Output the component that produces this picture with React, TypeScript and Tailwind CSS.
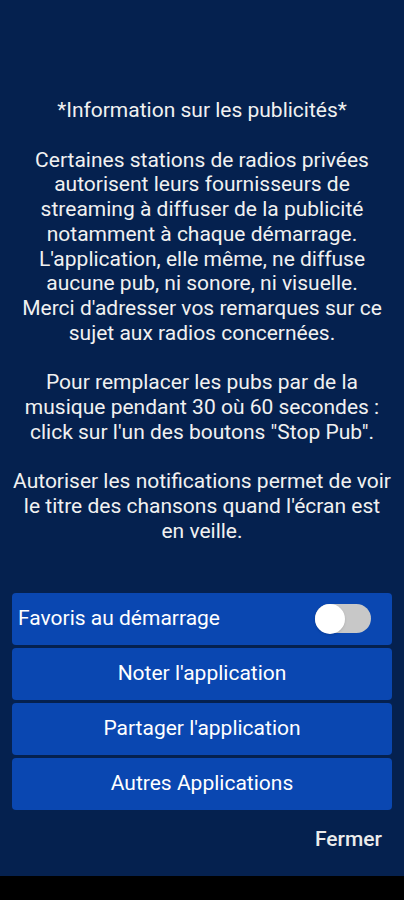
import React, { useState } from "react";

const BG = "#05214f";
const BUTTON_BLUE = "#0a47b1";

// line breaks follow the original screen
const paragraphs = [
  [
    "Certaines stations de radios privées",
    "autorisent leurs fournisseurs de",
    "streaming à diffuser de la publicité",
    "notamment à chaque démarrage.",
    "L'application, elle même, ne diffuse",
    "aucune pub, ni sonore, ni visuelle.",
    "Merci d'adresser vos remarques sur ce",
    "sujet aux radios concernées.",
  ],
  [
    "Pour remplacer les pubs par de la",
    "musique pendant 30 où 60 secondes :",
    "click sur l'un des boutons \"Stop Pub\".",
  ],
  [
    "Autoriser les notifications permet de voir",
    "le titre des chansons quand l'écran est",
    "en veille.",
  ],
];

const actions = ["Noter l'application", "Partager l'application", "Autres Applications"];

export default function App() {
  const [favoris, setFavoris] = useState(false);

  return (
    <div
      className="flex h-[900px] w-full flex-col"
      style={{ fontFamily: "Roboto, 'Noto Sans', sans-serif" }}
    >
      <div className="flex flex-1 flex-col" style={{ backgroundColor: BG }}>
        {/* Info text */}
        <div className="whitespace-nowrap px-[8px] pt-[98px] text-center text-[21px] leading-[24.75px] text-[#f1f1f1]">
          <p>*Information sur les publicités*</p>
          {paragraphs.map((lines, i) => (
            <p key={i} className="mt-[24.75px]">
              {lines.map((line, j) => (
                <span key={j} className="block">
                  {line}
                </span>
              ))}
            </p>
          ))}
        </div>

        {/* Buttons */}
        <div className="mt-[49px] flex flex-col gap-[3px] px-[12px]">
          <div
            className="flex h-[52px] items-center justify-between rounded-[4px] pl-[6px] pr-[21px]"
            style={{ backgroundColor: BUTTON_BLUE }}
          >
            <span className="text-[21px] text-white">Favoris au démarrage</span>
            <button
              onClick={() => setFavoris(!favoris)}
              className={
                favoris
                  ? "flex h-[29px] w-[56px] items-center justify-end rounded-full bg-[#9fc0ff]"
                  : "flex h-[29px] w-[56px] items-center justify-start rounded-full bg-[#c8c8c8]"
              }
            >
              <span className="h-[30px] w-[30px] rounded-full bg-white shadow-sm"></span>
            </button>
          </div>
          {actions.map((label) => (
            <button
              key={label}
              className="flex h-[52px] items-center justify-center rounded-[4px] text-[21px] text-white"
              style={{ backgroundColor: BUTTON_BLUE }}
            >
              {label}
            </button>
          ))}
        </div>

        <div className="mt-[17px] flex justify-end pr-[22px]">
          <button className="text-[21px] font-medium leading-[24px] text-[#ececec]">Fermer</button>
        </div>
      </div>
      <div className="h-[24px] bg-black"></div>
    </div>
  );
}
